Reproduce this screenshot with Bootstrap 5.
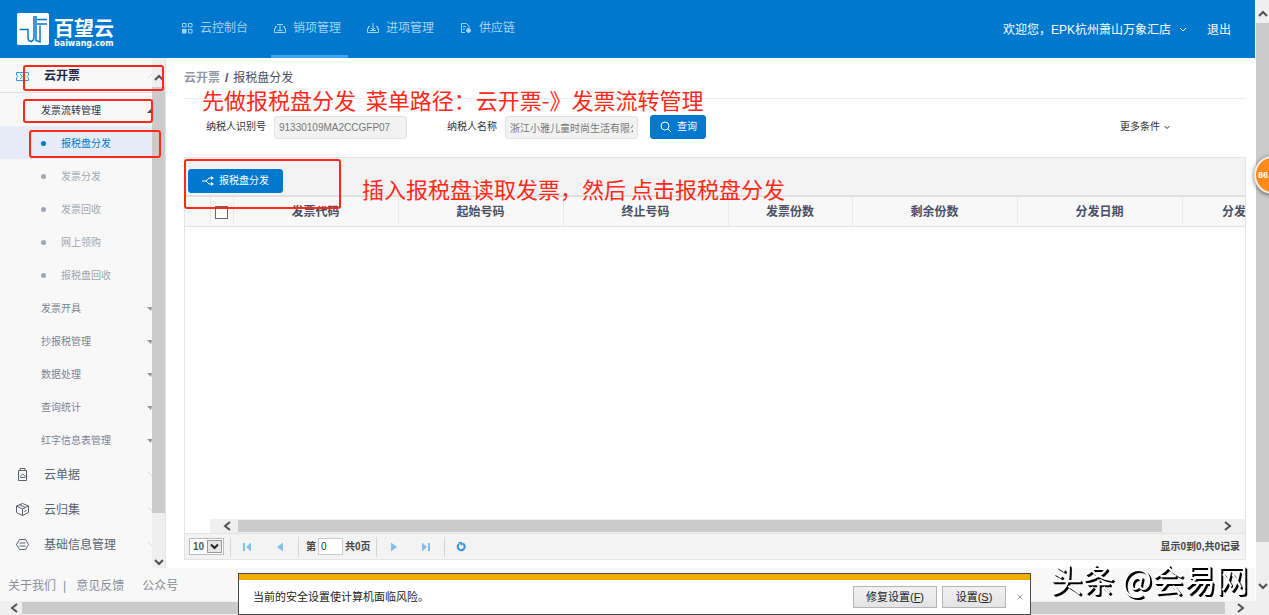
<!DOCTYPE html>
<html lang="zh-CN">
<head>
<meta charset="utf-8">
<meta name="viewport" content="width=device-width, initial-scale=1">
<title>百望云 - 报税盘分发</title>
<link href="https://cdn.jsdelivr.net/npm/bootstrap@5.3.0/dist/css/bootstrap.min.css" rel="stylesheet">
<style>
:root{--brand:#0078ce;--pane:#f8f8f8;--rule:#e4e4e4;--note:#ff2819}
body{font-family:"Liberation Sans","Noto Sans CJK SC",sans-serif;font-size:12px;line-height:16px;color:#4a5064;overflow:hidden}
a{text-decoration:none;color:inherit}
svg{display:block;flex:none;fill:none;stroke:currentColor}
.min0{min-width:0;min-height:0}
/* header */
.topbar{height:58px;background:var(--brand);color:#fff;padding:0 24px 0 17px}
.brand-name{font-size:20px;line-height:22px;font-weight:700}
.brand-url{font-family:"DejaVu Sans",sans-serif;font-size:8px;line-height:8px;font-weight:700}
.topnav{margin-left:64px;gap:16px}
.topnav a{height:58px;padding:1px 3px 0 3px;gap:7px;color:#a5d2f2;border-bottom:3px solid transparent;width:77px}
.topnav a.active{border-color:#3fa3ec}
.welcome{padding-top:2px}
/* scrollbars */
.track{background:#efefef;color:#505050}
.thumb{background:#cbcbcb}
.vtrack{width:13px}
.htrack{height:14px}
/* side menu */
.side{width:166px;background:var(--pane);border-right:1px solid var(--rule)}
.side a{display:flex;align-items:center;position:relative;height:33px;font-size:10px;padding:2px 0 0 41px;color:#7c8290}
.side a.level1{height:35px;font-size:12px;padding-left:16px;gap:15px;color:#5c6272}
.side a.level1.open{border-bottom:1px solid #e2e2e2;color:#1f2540;font-weight:700}
.side a.level2.open{color:#2b3046}
.side a.level3{color:#a0a6b3;gap:15px}
.side a.level3.active{background:#e6edf8;color:var(--brand)}
.dot{width:5px;height:5px;border-radius:50%;background:currentColor;flex:none}
.tri{position:absolute;right:0;width:0;height:0;border:2px solid transparent;border-right-width:1px;border-top:4px solid #8894a5;border-left-width:4px;border-bottom:0}
.tri.up{border-top:0;border-bottom:4px solid #3c4356}
.chev{position:absolute;right:0;color:#d6d9de}
.mark-box{position:absolute;border:2px solid var(--note);border-radius:3px;z-index:3;pointer-events:none}
.mark-a{left:23px;top:7px;width:141px;height:26px}
.mark-b{left:23px;top:6px;width:130px;height:24px}
.mark-c{left:29px;top:4px;width:132px;height:28px}
.mark-d{left:-1px;top:1px;width:157px;height:50px}
.note{position:absolute;z-index:4;color:var(--note);font-family:"Noto Sans CJK SC",sans-serif;font-size:22px;line-height:30px;white-space:pre;pointer-events:none}
/* work area */
.work{padding:0 9px 8px 18px}
.crumbs{height:41px;border-bottom:1px solid #ececec}
.filters{height:58px;padding:0 76px 2px 22px;font-size:10px;color:#333}
.filters input{width:133px;height:23px;border:1px solid #dfe3e8;border-radius:3px;background:#f2f2f2;color:#777;padding:0 4px;font-size:10px}
.btn-cloud{--bs-btn-bg:var(--brand);--bs-btn-color:#fff;--bs-btn-border-color:var(--brand);--bs-btn-hover-bg:#006ab8;--bs-btn-hover-color:#fff;--bs-btn-border-radius:3px;--bs-btn-font-size:10px;--bs-btn-line-height:14px;--bs-btn-padding-x:8px;--bs-btn-padding-y:4px}
.btn-cloud.wide{--bs-btn-padding-x:13px}
.gridbox{border:1px solid var(--rule);position:relative}
.tools{height:39px;background:#f3f3f3;padding:9px 0 0 3px;border-bottom:2px solid #e0e0e0;position:relative}
.heads{table-layout:fixed;width:1061px;border-collapse:collapse;background:#f8f8f8}
.heads th{height:29px;padding:2px 0 0;text-align:center;font-weight:700;color:#4a5064;border-right:1px dotted #dcdcdc;border-bottom:1px solid var(--rule)}
.heads input{appearance:none;width:13px;height:13px;border:1px solid #666;background:#fff;display:block;margin:0 auto}
.heads th:last-child{text-align:right;border-right:0}
.pager{height:26px;background:#f3f3f3;border-top:1px solid var(--rule);font-size:10px;font-weight:700;color:#444;padding:0 5px 0 4px}
.pager select{width:35px;height:17px;border:1px solid #bbb;background:#fff;font-size:10px;font-weight:700;color:#555;padding:0 3px;appearance:none;line-height:14px}
.pick{position:relative}
.pick span{position:absolute;right:2px;top:2px;width:15px;height:13px;background:#e6e6e6;border:1px solid #999;color:#222;pointer-events:none}
.pager input{width:25px;height:17px;border:1px solid #ccc;font-size:10px;padding:0 2px;color:#333}
.pager button{border:0;background:none;padding:0;color:#7fc0ee;width:12px}
.vr-line{width:1px;height:20px;background:#d5d5d5}
/* bottom */
.foot{height:33px;background:var(--pane);padding:2px 0 0 8px;color:#8a8e99}
.alertbar{position:fixed;left:238px;bottom:0;width:793px;height:42px;background:#fff;border:1px solid #4a4a4a;z-index:6;font-size:11px;color:#222}
.alertbar .stripe{height:6px;background:#f2ae00}
.alertbar .sysbtn{height:22px;border:1px solid #b4b4b4;border-radius:0;background:linear-gradient(#f1f1f1,#e3e3e3);font-size:11px;line-height:14px;color:#222;padding:0}
.badge86{position:fixed;right:-21px;top:156px;width:36px;height:38px;border-radius:50%;background:#ff8a1c;border:2px solid #f4efe9;box-shadow:0 1px 4px rgba(0,0,0,.6);color:#fff;font:700 9px/34px "Liberation Sans",sans-serif;z-index:7;padding-left:2px}
.stamp{position:fixed;right:21px;bottom:17px;z-index:7;font-family:"Noto Sans CJK SC",sans-serif;font-size:32px;line-height:40px;color:#fff;text-shadow:1px 1px 0 #000,2px 2px 0 #000;white-space:nowrap}
</style>
</head>
<body>
<svg width="0" height="0" class="position-absolute" aria-hidden="true">
<symbol id="up" viewBox="0 0 10 7"><path d="M1 6l4-4 4 4" stroke-width="2"/></symbol>
<symbol id="down" viewBox="0 0 10 7"><path d="M1 1l4 4 4-4" stroke-width="2"/></symbol>
<symbol id="left" viewBox="0 0 8 10"><path d="M7 1L2 5l5 4" stroke-width="2"/></symbol>
<symbol id="right" viewBox="0 0 8 10"><path d="M1 1l5 4-5 4" stroke-width="2"/></symbol>
</svg>
<div class="d-flex flex-column vh-100">
<div class="d-flex flex-grow-1 min0">
<div class="d-flex flex-column flex-grow-1 min0">

<header class="topbar d-flex align-items-center">
  <a href="#" class="d-flex align-items-center" style="gap:5px">
    <svg width="32" height="32" viewBox="0 0 32 32" stroke="none"><rect width="32" height="32" rx="3" fill="#fff"/><g stroke="#0078ce" stroke-width="1.500"><path d="M2.500 16.500H11v8c0 3 1 4 4 4"/><path d="M17 3v21c0 2-1 4-3 4.500M19 3v24.500l4 1.500V12.500"/><path d="M20 6.500h10M20 11h10"/></g></svg>
    <span class="d-flex flex-column pt-2"><span class="brand-name">百望云</span><span class="brand-url">baiwang.com</span></span>
  </a>
  <nav class="topnav d-flex">
    <a href="#" class="d-flex align-items-center"><svg width="12" height="12"><path d="M1.500 1.500h3.500v3.500h-3.500zM7.500 1.500h3.500v3.500h-3.500zM7.500 7.500h3.500v3.500h-3.500z"/><path d="M1 7h4.500v4.500h-4.500z" fill="currentColor" stroke="none"/></svg>云控制台</a>
    <a href="#" class="d-flex align-items-center active"><svg width="12" height="12"><path d="M3 4.500H1.500v2h-1v4h11v-4h-1v-2H9M6 9V2M3 2.500h6M3.500 8.500h5"/></svg>销项管理</a>
    <a href="#" class="d-flex align-items-center"><svg width="12" height="12"><path d="M3 4.500H1.500v2h-1v4h11v-4h-1v-2H9M6 1v7M4 6l2 2 2-2M3 8.500h6"/></svg>进项管理</a>
    <a href="#" class="d-flex align-items-center"><svg width="12" height="12"><path d="M5 10.500H1.500v-9h5l2.500 2.500v2M3 4.500h3M3 7h2"/><circle cx="8.500" cy="8.500" r="2" fill="currentColor"/></svg>供应链</a>
  </nav>
  <div class="welcome ms-auto d-flex align-items-center">
    <a href="#" class="d-flex align-items-center gap-2">欢迎您，EPK杭州萧山万象汇店<svg width="8" height="6"><path d="M1 1l3 3 3-3"/></svg></a>
    <a href="#" style="margin-left:20px">退出</a>
  </div>
</header>

<div class="d-flex flex-grow-1 min0">
<aside class="side d-flex flex-shrink-0">
  <nav class="flex-grow-1">
    <a href="#" class="level1 open"><svg width="13" height="11" style="color:#3b97d8"><path d="M.5 1.500h12v2.500l-1.500 1.500 1.500 1.500v2.500H.5V7L2 5.500.5 4zM4 3l5 5M9 3L4 8"/></svg>云开票<svg class="chev" width="4" height="5"><path d="M0 4l4-4"/></svg><i class="mark-box mark-a"></i></a>
    <a href="#" class="level2 open">发票流转管理<i class="tri up"></i><i class="mark-box mark-b"></i></a>
    <a href="#" class="level3 active"><i class="dot"></i>报税盘分发<i class="mark-box mark-c"></i></a>
    <a href="#" class="level3"><i class="dot"></i>发票分发</a>
    <a href="#" class="level3"><i class="dot"></i>发票回收</a>
    <a href="#" class="level3"><i class="dot"></i>网上领购</a>
    <a href="#" class="level3"><i class="dot"></i>报税盘回收</a>
    <a href="#" class="level2">发票开具<i class="tri"></i></a>
    <a href="#" class="level2">抄报税管理<i class="tri"></i></a>
    <a href="#" class="level2">数据处理<i class="tri"></i></a>
    <a href="#" class="level2">查询统计<i class="tri"></i></a>
    <a href="#" class="level2">红字信息表管理<i class="tri"></i></a>
    <a href="#" class="level1"><svg width="13" height="13"><path d="M2.500 2.500h8v10h-8zM4 .5h5v2M4 .5v2M4.500 9.500h4.500c1-1.500-.5-2.500-1-2-.5-2-2.500-1.500-2.500 0-1 0-1.500 1-1 2z"/></svg>云单据<svg class="chev" width="4" height="5"><path d="M0 0l4 4"/></svg></a>
    <a href="#" class="level1"><svg width="13" height="13"><path d="M6.500 .5l6 2.500v6.500l-6 3-6-3V3zM.5 3l6 3 6-3M6.500 6v6.500M3.500 1.800l6 2.800M8.500 8.500l2-1"/></svg>云归集<svg class="chev" width="4" height="5"><path d="M0 0l4 4"/></svg></a>
    <a href="#" class="level1"><svg width="13" height="13"><path d="M3.500 1.500h6l3 5-3 5h-6l-3-5zM3.500 5h6M3.500 8h6"/></svg>基础信息管理<svg class="chev" width="4" height="5"><path d="M0 0l4 4"/></svg></a>
  </nav>
  <div class="track vtrack d-flex flex-column align-items-center">
    <svg width="10" height="7" class="mt-3"><use href="#up"/></svg>
    <div class="thumb w-100 flex-grow-1" style="margin:6px 0 46px"></div>
    <svg width="10" height="7" style="margin-bottom:2px"><use href="#down"/></svg>
  </div>
</aside>

<main class="work flex-grow-1 d-flex flex-column min0 position-relative">
  <div class="crumbs d-flex align-items-center flex-shrink-0" style="gap:5px"><a href="#" class="fw-bold" style="color:#9299a8">云开票</a><b>/</b><span>报税盘分发</span></div>
  <p class="note m-0" style="left:36px;top:26px">先做报税盘分发  菜单路径：云开票-》发票流转管理</p>
  <form class="filters d-flex align-items-center flex-shrink-0">
    <label for="tax-id" style="margin-right:8px">纳税人识别号</label>
    <input id="tax-id" type="text" value="91330109MA2CCGFP07">
    <label for="tax-name" style="margin:0 8px 0 40px">纳税人名称</label>
    <input id="tax-name" type="text" value="浙江小雅儿童时尚生活有限公司">
    <button type="button" class="btn btn-cloud d-flex align-items-center" style="margin-left:12px;gap:5px"><svg width="13" height="12"><circle cx="6" cy="5" r="4"/><path d="M9 8l3 3"/></svg>查询</button>
    <a href="#" class="ms-auto d-flex align-items-center gap-1">更多条件<svg width="6" height="5"><path d="M.5 1L3 3.500 5.500 1"/></svg></a>
  </form>
  <section class="gridbox flex-grow-1 d-flex flex-column min0">
    <div class="tools flex-shrink-0 d-flex align-items-center">
      <button type="button" class="btn btn-cloud wide d-flex align-items-center" style="gap:5px"><svg width="12" height="10"><path d="M0 5h4l3-3h3M4 5l3 3h3"/><path d="M9 0l3 2-3 2zM9 6l3 2-3 2z" fill="currentColor" stroke="none"/></svg>报税盘分发</button>
      <i class="mark-box mark-d"></i>
      <p class="note m-0" style="left:177px;top:15px">插入报税盘读取发票，然后 点击报税盘分发</p>
    </div>
    <div class="overflow-hidden flex-grow-1">
      <table class="heads">
        <colgroup><col width="25"><col width="23"><col width="165"><col width="165"><col width="165"><col width="124"><col width="165"><col width="165"><col width="64"></colgroup>
        <thead><tr><th></th><th><input type="checkbox" aria-label="全选"></th><th>发票代码</th><th>起始号码</th><th>终止号码</th><th>发票份数</th><th>剩余份数</th><th>分发日期</th><th>分发</th></tr></thead>
      </table>
    </div>
    <div class="track htrack d-flex align-items-center flex-shrink-0" style="margin-left:25px;padding:0 13px">
      <svg width="8" height="10"><use href="#left"/></svg>
      <div class="flex-grow-1" style="padding:0 62px 0 7px"><div class="thumb" style="height:12px"></div></div>
      <svg width="8" height="10"><use href="#right"/></svg>
    </div>
    <div class="pager d-flex align-items-center flex-shrink-0">
      <div class="pick"><select aria-label="每页条数"><option>10</option><option>20</option></select><span><svg width="13" height="11"><path d="M3 3.500l3.500 3.500L10 3.500" stroke-width="2"/></svg></span></div>
      <i class="vr-line" style="margin:0 11px 0 6px"></i>
      <button type="button" aria-label="首页"><svg width="10" height="10"><path d="M2 1v8" stroke-width="2"/><path d="M9 .5v9L4 5z" fill="currentColor" stroke="none"/></svg></button>
      <button type="button" aria-label="上一页" style="margin-left:22px"><svg width="8" height="10"><path d="M7 .5v9L1 5z" fill="currentColor" stroke="none"/></svg></button>
      <i class="vr-line" style="margin:0 7px 0 10px"></i>
      <label for="page-no">第</label><input id="page-no" type="text" value="0" style="margin:0 2px"><span>共0页</span>
      <i class="vr-line" style="margin:0 12px 0 5px"></i>
      <button type="button" aria-label="下一页"><svg width="8" height="10"><path d="M2 .5v9L8 5z" fill="currentColor" stroke="none"/></svg></button>
      <button type="button" aria-label="末页" style="margin-left:20px"><svg width="10" height="10"><path d="M1 .5v9L6 5z" fill="currentColor" stroke="none"/><path d="M8 1v8" stroke-width="2"/></svg></button>
      <i class="vr-line" style="margin:0 11px"></i>
      <button type="button" aria-label="刷新" style="color:#2c97dc"><svg width="10" height="11"><path d="M6.500 2.500A3.500 3.500 0 1 1 3 3" stroke-width="2"/><path d="M2 1h4v4z" fill="currentColor" stroke="none"/></svg></button>
      <span class="ms-auto">显示0到0,共0记录</span>
    </div>
  </section>
</main>
</div>

<footer class="foot d-flex align-items-center"><a href="#">关于我们</a><span style="margin:0 10px 0 7px">|</span><a href="#">意见反馈</a><a href="#" style="margin-left:18px">公众号</a></footer>
</div>

<div class="track vtrack d-flex flex-column align-items-center flex-shrink-0" style="margin-left:1px">
  <svg width="10" height="7" style="margin-top:10px"><use href="#up"/></svg>
  <div class="thumb w-100 flex-grow-1" style="margin:6px 0 41px"></div>
  <svg width="10" height="7" style="margin-bottom:11px"><use href="#down"/></svg>
</div>
</div>
<div class="track htrack d-flex align-items-center flex-shrink-0" style="padding:0 24px 0 10px">
  <svg width="8" height="10"><use href="#left"/></svg>
  <div class="flex-grow-1" style="padding:0 12px 0 4px"><div class="thumb" style="height:12px"></div></div>
  <svg width="8" height="10"><use href="#right"/></svg>
</div>
</div>

<div class="alertbar" role="alert">
  <div class="stripe"></div>
  <div class="d-flex align-items-center" style="padding:6px 6px 0 14px"><span>当前的安全设置使计算机面临风险。</span>
    <button type="button" class="btn sysbtn ms-auto" style="width:84px">修复设置(<u>F</u>)</button>
    <button type="button" class="btn sysbtn" style="width:64px;margin:0 10px 0 5px">设置(<u>S</u>)</button>
    <button type="button" class="border-0 bg-transparent p-0" aria-label="关闭" style="color:#999"><svg width="8" height="8"><path d="M1.500 1.500l5 5M6.500 1.500l-5 5"/></svg></button>
  </div>
</div>
<div class="badge86">86</div>
<div class="stamp">头条 @会易网</div>
<script src="https://cdn.jsdelivr.net/npm/bootstrap@5.3.0/dist/js/bootstrap.bundle.min.js"></script>
</body>
</html>
